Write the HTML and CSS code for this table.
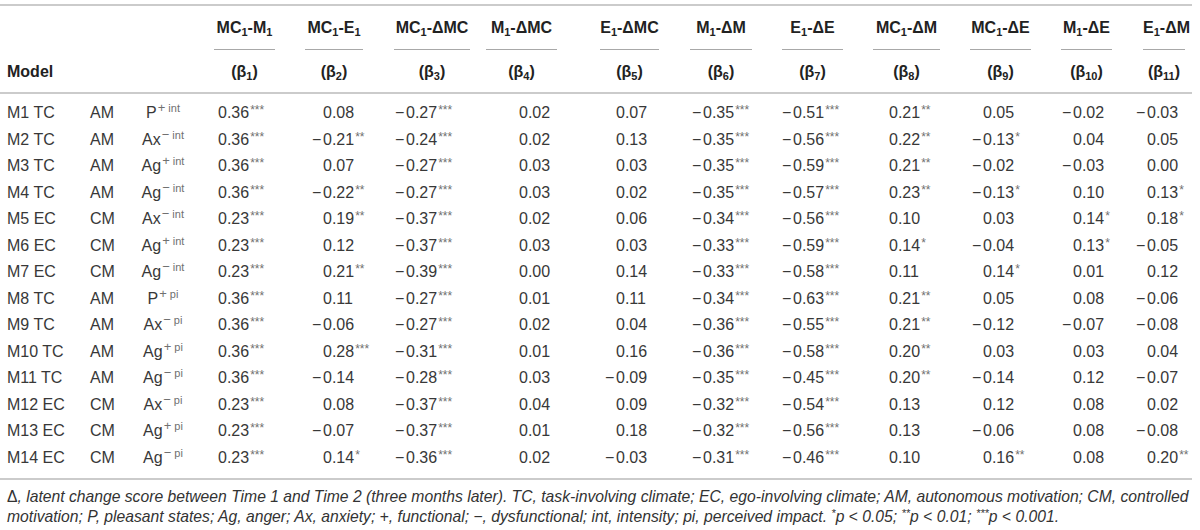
FILE: index.html
```html
<!DOCTYPE html>
<html lang="en">
<head>
    <meta charset="UTF-8">
    <meta name="viewport" content="width=device-width, initial-scale=1.0">
    <title>Latent change models</title>
    <link rel="stylesheet" href="styles.css">
</head>
<body>
    <div class="table-wrap">
        <table class="stats">
            <colgroup>
                <col class="w-model"><col class="w-motiv"><col class="w-emo">
                <col class="w-b1"><col class="w-b2"><col class="w-b3"><col class="w-b4">
                <col class="w-b5"><col class="w-b6"><col class="w-b7"><col class="w-b8">
                <col class="w-b9"><col class="w-b10"><col class="w-b11">
            </colgroup>
            <thead>
                <tr class="path-head">
                    <th></th><th></th><th></th>
                    <th class="b1"><div class="in">MC<sub>1</sub>-M<sub>1</sub></div></th>
                    <th class="b2"><div class="in">MC<sub>1</sub>-E<sub>1</sub></div></th>
                    <th class="b3"><div class="in">MC<sub>1</sub>-ΔMC</div></th>
                    <th class="b4"><div class="in">M<sub>1</sub>-ΔMC</div></th>
                    <th class="b5"><div class="in">E<sub>1</sub>-ΔMC</div></th>
                    <th class="b6"><div class="in">M<sub>1</sub>-ΔM</div></th>
                    <th class="b7"><div class="in">E<sub>1</sub>-ΔE</div></th>
                    <th class="b8"><div class="in">MC<sub>1</sub>-ΔM</div></th>
                    <th class="b9"><div class="in">MC<sub>1</sub>-ΔE</div></th>
                    <th class="b10"><div class="in">M<sub>1</sub>-ΔE</div></th>
                    <th class="b11"><div class="in">E<sub>1</sub>-ΔM</div></th>
                </tr>
                <tr class="beta-head">
                    <th class="model-label"><div class="in">Model</div></th><th></th><th></th>
                    <th class="b1"><div class="in">(β<sub>1</sub>)</div></th>
                    <th class="b2"><div class="in">(β<sub>2</sub>)</div></th>
                    <th class="b3"><div class="in">(β<sub>3</sub>)</div></th>
                    <th class="b4"><div class="in">(β<sub>4</sub>)</div></th>
                    <th class="b5"><div class="in">(β<sub>5</sub>)</div></th>
                    <th class="b6"><div class="in">(β<sub>6</sub>)</div></th>
                    <th class="b7"><div class="in">(β<sub>7</sub>)</div></th>
                    <th class="b8"><div class="in">(β<sub>8</sub>)</div></th>
                    <th class="b9"><div class="in">(β<sub>9</sub>)</div></th>
                    <th class="b10"><div class="in">(β<sub>10</sub>)</div></th>
                    <th class="b11"><div class="in">(β<sub>11</sub>)</div></th>
                </tr>
            </thead>
            <tbody id="rows"></tbody>
        </table>
        <p class="note">
            <span class="up">Δ</span>, latent change score between Time 1 and Time 2 (three months later). TC, task-involving climate; EC, ego-involving climate; AM, autonomous motivation; CM, controlled<br>
            motivation; P, pleasant states; Ag, anger; Ax, anxiety; <span class="up">+</span>, functional; <span class="up">−</span>, dysfunctional; int, intensity; pi, perceived impact. <sup>*</sup>p <span class="up">&lt;</span> 0.05; <sup>**</sup>p <span class="up">&lt;</span> 0.01; <sup>***</sup>p <span class="up">&lt;</span> 0.001.
        </p>
    </div>

    <script>
        // model, motivation, emotion, sign, scale, then beta 1..11
        const models = [
            ['M1 TC', 'AM', 'P', '+', 'int', '0.36***', '0.08', '-0.27***', '0.02', '0.07', '-0.35***', '-0.51***', '0.21**', '0.05', '-0.02', '-0.03'],
            ['M2 TC', 'AM', 'Ax', '−', 'int', '0.36***', '-0.21**', '-0.24***', '0.02', '0.13', '-0.35***', '-0.56***', '0.22**', '-0.13*', '0.04', '0.05'],
            ['M3 TC', 'AM', 'Ag', '+', 'int', '0.36***', '0.07', '-0.27***', '0.03', '0.03', '-0.35***', '-0.59***', '0.21**', '-0.02', '-0.03', '0.00'],
            ['M4 TC', 'AM', 'Ag', '−', 'int', '0.36***', '-0.22**', '-0.27***', '0.03', '0.02', '-0.35***', '-0.57***', '0.23**', '-0.13*', '0.10', '0.13*'],
            ['M5 EC', 'CM', 'Ax', '−', 'int', '0.23***', '0.19**', '-0.37***', '0.02', '0.06', '-0.34***', '-0.56***', '0.10', '0.03', '0.14*', '0.18*'],
            ['M6 EC', 'CM', 'Ag', '+', 'int', '0.23***', '0.12', '-0.37***', '0.03', '0.03', '-0.33***', '-0.59***', '0.14*', '-0.04', '0.13*', '-0.05'],
            ['M7 EC', 'CM', 'Ag', '−', 'int', '0.23***', '0.21**', '-0.39***', '0.00', '0.14', '-0.33***', '-0.58***', '0.11', '0.14*', '0.01', '0.12'],
            ['M8 TC', 'AM', 'P', '+', 'pi', '0.36***', '0.11', '-0.27***', '0.01', '0.11', '-0.34***', '-0.63***', '0.21**', '0.05', '0.08', '-0.06'],
            ['M9 TC', 'AM', 'Ax', '−', 'pi', '0.36***', '-0.06', '-0.27***', '0.02', '0.04', '-0.36***', '-0.55***', '0.21**', '-0.12', '-0.07', '-0.08'],
            ['M10 TC', 'AM', 'Ag', '+', 'pi', '0.36***', '0.28***', '-0.31***', '0.01', '0.16', '-0.36***', '-0.58***', '0.20**', '0.03', '0.03', '0.04'],
            ['M11 TC', 'AM', 'Ag', '−', 'pi', '0.36***', '-0.14', '-0.28***', '0.03', '-0.09', '-0.35***', '-0.45***', '0.20**', '-0.14', '0.12', '-0.07'],
            ['M12 EC', 'CM', 'Ax', '−', 'pi', '0.23***', '0.08', '-0.37***', '0.04', '0.09', '-0.32***', '-0.54***', '0.13', '0.12', '0.08', '0.02'],
            ['M13 EC', 'CM', 'Ag', '+', 'pi', '0.23***', '-0.07', '-0.37***', '0.01', '0.18', '-0.32***', '-0.56***', '0.13', '-0.06', '0.08', '-0.08'],
            ['M14 EC', 'CM', 'Ag', '−', 'pi', '0.23***', '0.14*', '-0.36***', '0.02', '-0.03', '-0.31***', '-0.46***', '0.10', '0.16**', '0.08', '0.20**']
        ];

        function coefCell(value) {
            const negative = value.startsWith('-');
            const stars = value.replace(/[^*]/g, '');
            const number = value.replace(/[-*]/g, '');
            let html = '<span class="sign">' + (negative ? '−' : '') + '</span>' + number;
            if (stars) {
                html += '<sup class="sig">' + stars + '</sup>';
            }
            return '<td class="coef">' + html + '</td>';
        }

        const body = document.getElementById('rows');
        models.forEach(row => {
            const [model, motiv, emo, sign, scale, ...betas] = row;
            const tr = document.createElement('tr');
            tr.innerHTML =
                '<td class="model">' + model + '</td>' +
                '<td class="motiv">' + motiv + '</td>' +
                '<td class="emo">' + emo + '<sup class="tag"><span class="tag-sign">' + sign + '</span> ' + scale + '</sup></td>' +
                betas.map(coefCell).join('');
            body.appendChild(tr);
        });
    </script>
</body>
</html>
```

FILE: styles.css
```css
* {
    margin: 0;
    padding: 0;
    box-sizing: border-box;
}

body {
    background-color: #fff;
    color: #383838;
    font-family: "Liberation Sans", Arial, sans-serif;
    padding-top: 4px;
}

.table-wrap {
    width: 1192px;
}

.stats {
    width: 1192px;
    table-layout: fixed;
    border-collapse: separate;
    border-spacing: 0;
    border-top: 2px solid #cbcbcb;
    border-bottom: 2px solid #cbcbcb;
    font-size: 16px;
}

.w-model { width: 80px; }
.w-motiv { width: 60px; }
.w-emo { width: 59px; }
.w-b1 { width: 91px; }
.w-b2 { width: 88px; }
.w-b3 { width: 100px; }
.w-b4 { width: 100px; }
.w-b5 { width: 97px; }
.w-b6 { width: 92px; }
.w-b7 { width: 91px; }
.w-b8 { width: 97px; }
.w-b9 { width: 91px; }
.w-b10 { width: 81px; }
.w-b11 { width: 65px; }

.stats th,
.stats td {
    padding: 0;
    text-align: left;
    vertical-align: middle;
    white-space: nowrap;
}

.stats th {
    color: #222;
    font-weight: bold;
}

.stats th .in {
    margin: 0 15px;
    line-height: 18px;
    text-align: center;
}

.path-head .in {
    padding: 13px 0 12px;
    border-bottom: 1px solid #a8a8a8;
}

.beta-head th {
    border-bottom: 2px solid #cbcbcb;
}

.beta-head .in {
    padding: 13px 0 11px;
}

.beta-head .model-label .in {
    margin: 0 0 0 7px;
    text-align: left;
}

/* header rules are not evenly spaced in the original */
.stats th.b3 .in { margin: 0 8px 0 16px; }
.stats th.b4 .in { margin: 0 21px 0 8px; }
.stats th.b5 .in { margin: 0 16px 0 22px; }
.stats th.b11 .in { margin: 0 7px 0 16px; }

sub {
    font-size: 11px;
    line-height: 0;
    vertical-align: -3px;
}

sup {
    line-height: 0;
}

.stats td {
    line-height: 26.5px;
}

.stats tbody tr:first-child td {
    padding-top: 6px;
}

.stats tbody tr:last-child td {
    padding-bottom: 7px;
}

.model {
    padding-left: 7px !important;
}

.motiv {
    padding-left: 10px !important;
}

.emo {
    text-align: center !important;
    padding-right: 13px !important;
}

.tag {
    font-size: 11px;
    color: #707070;
    vertical-align: 6px;
    margin-left: 1px;
}

.tag-sign {
    font-size: 13px;
}

.sign {
    display: inline-block;
    width: 11px;
}

.sig {
    font-size: 12px;
    color: #707070;
    vertical-align: 4px;
    margin-left: 1px;
}

/* where each coefficient column starts its numbers */
.stats td:nth-child(4) { padding-left: 8px; }
.stats td:nth-child(5) { padding-left: 22px; }
.stats td:nth-child(6) { padding-left: 17px; }
.stats td:nth-child(7) { padding-left: 30px; }
.stats td:nth-child(8) { padding-left: 27px; }
.stats td:nth-child(9) { padding-left: 17px; }
.stats td:nth-child(10) { padding-left: 15px; }
.stats td:nth-child(11) { padding-left: 20px; }
.stats td:nth-child(12) { padding-left: 17px; }
.stats td:nth-child(13) { padding-left: 16px; }
.stats td:nth-child(14) { padding-left: 9px; }

.note {
    padding: 7px 0 0 7px;
    font-size: 15.7px;
    line-height: 20px;
    font-style: italic;
    color: #333;
    white-space: nowrap;
}

.note .up {
    font-style: normal;
}

.note sup {
    font-size: 11px;
    vertical-align: 5px;
}
```
